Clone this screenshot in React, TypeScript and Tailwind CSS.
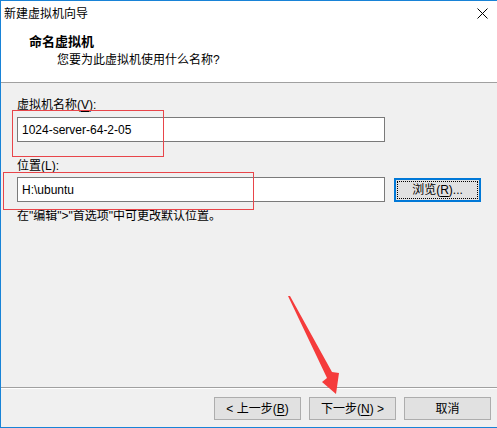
import React from "react";

const font = {
  fontFamily: '"Liberation Sans", "Noto Sans CJK SC", sans-serif',
};

function Key({ k }: { k: string }) {
  return <span className="underline underline-offset-2">{k}</span>;
}

function FooterButton({ children }: { children: React.ReactNode }) {
  return (
    <div className="w-[87px] h-[23px] border border-[#adadad] bg-[#e1e1e1] flex items-center justify-center text-[12px] text-black">
      {children}
    </div>
  );
}

export default function App() {
  return (
    <div
      className="relative w-[497px] h-[428px] border-l border-t border-b border-[#1883d7] bg-[#f0f0f0] flex flex-col overflow-hidden text-[12px] leading-[16px] text-black"
      style={font}
    >
      {/* title + page header */}
      <div className="h-[82px] bg-white border-b border-[#a0a0a0] flex flex-col">
        <div className="h-[25px] flex items-center pl-[3px] pr-[8px]">
          <span className="flex-1 text-[12px]">新建虚拟机向导</span>
          <svg width="11" height="11" viewBox="0 0 11 11" className="mr-[1px]">
            <path d="M0.5 0.5 L10.5 10.5 M10.5 0.5 L0.5 10.5" stroke="#000" strokeWidth="1" />
          </svg>
        </div>
        <div className="pl-[28px] mt-[8px] font-bold text-[13px]">命名虚拟机</div>
        <div className="pl-[56px] mt-[2px]">您要为此虚拟机使用什么名称?</div>
      </div>

      {/* form */}
      <div className="flex flex-col pl-[16px] pt-[14px]">
        <div>
          虚拟机名称(<Key k="V" />):
        </div>
        <div className="mt-[4px] w-[368px] h-[25px] border border-[#7a7a7a] bg-white flex items-center pl-[4px] text-[12px]">
          1024-server-64-2-05
        </div>
        <div className="mt-[16px]">
          位置(<Key k="L" />):
        </div>
        <div className="mt-[3px] flex items-start">
          <div className="w-[368px] h-[25px] border border-[#7a7a7a] bg-white flex items-center pl-[4px] text-[12px]">
            H:\ubuntu
          </div>
          <div className="ml-[9px] mt-[1px] w-[87px] h-[24px] border-2 border-[#0078d7] bg-[#e1e1e1] p-[1px]">
            <div className="w-full h-full border border-dotted border-black flex items-center justify-center">
              浏览(<Key k="R" />)...
            </div>
          </div>
        </div>
        <div className="mt-[6px]">在"编辑"&gt;"首选项"中可更改默认位置。</div>
      </div>

      <div className="flex-1" />

      {/* wizard buttons */}
      <div className="h-[40px] border-t border-[#a0a0a0]">
        <div className="h-full border-t border-white flex justify-end items-start gap-[8px] pt-[8px] pr-[6px]">
          <FooterButton>
            &lt; 上一步(<Key k="B" />)
          </FooterButton>
          <FooterButton>
            下一步(<Key k="N" />) &gt;
          </FooterButton>
          <FooterButton>取消</FooterButton>
        </div>
      </div>

      {/* annotation marks */}
      <div className="absolute left-[11px] top-[109px] w-[152px] h-[47px] border border-[#e8454a]" />
      <div className="absolute left-[2px] top-[171px] w-[251px] h-[38px] border border-[#e8454a]" />
      <svg
        className="absolute left-0 top-0"
        width="497"
        height="428"
        viewBox="0 0 497 428"
        style={{ pointerEvents: "none" }}
      >
        <polygon
          points="287,295 289,295 331,371 338,372 335,393 321,381 326,377"
          fill="#f53b3b"
        />
      </svg>
    </div>
  );
}
